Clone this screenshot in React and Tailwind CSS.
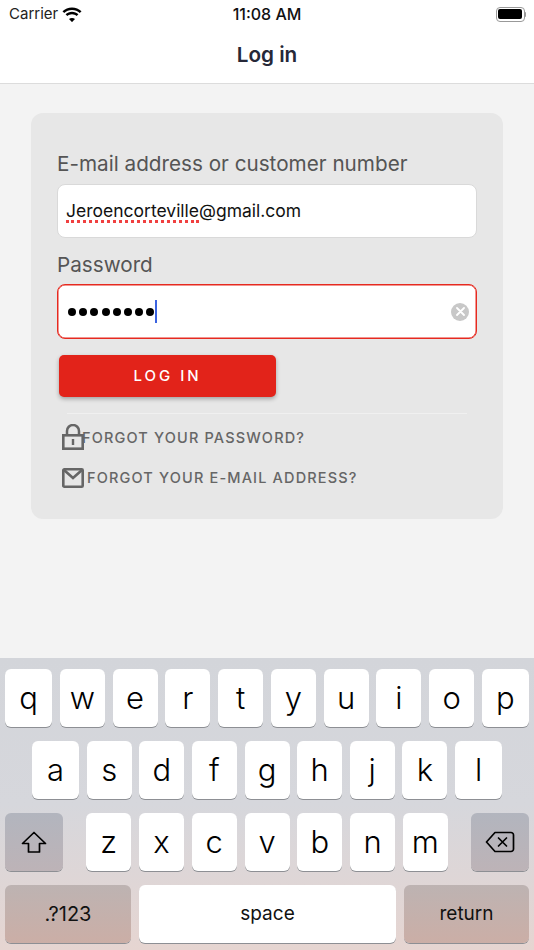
const row1 = ["q", "w", "e", "r", "t", "y", "u", "i", "o", "p"];
const row2 = ["a", "s", "d", "f", "g", "h", "j", "k", "l"];
const row3 = ["z", "x", "c", "v", "b", "n", "m"];

function Key({ label, wide }) {
  return (
    <div className={`${wide ? "w-[47px]" : "w-[45px]"} h-[58px] bg-white rounded-[6px] shadow-[0_1px_0_#8d8f94] flex items-center justify-center pb-[2px] text-[31px] leading-none text-black font-light`}>
      {label}
    </div>
  );
}

function StatusBar() {
  return (
    <div className="h-[28px] flex items-center justify-between pl-[9px] pr-[8px] text-[#111]">
      <div className="flex items-center gap-[4px] w-[119px]">
        <span className="text-[15px] text-[#222]">Carrier</span>
        <svg width="20" height="15" viewBox="0 0 20 15" fill="#000">
          <path d="M10 3c3 0 5.700 1.100 7.800 3.100L19.500 4.300C17 1.800 13.700.5 10 .5S3 1.800.5 4.300l1.700 1.800C4.300 4.100 7 3 10 3z" />
          <path d="M10 7.300c1.800 0 3.400.7 4.700 1.800l1.700-1.800C14.700 5.700 12.500 4.800 10 4.800s-4.700.9-6.400 2.500l1.700 1.800c1.300-1.100 2.900-1.800 4.700-1.800z" />
          <path d="M10 11c-1.200 0-2.100.4-3 1.100l3 3 3-3c-.9-.7-1.800-1.100-3-1.100z" />
        </svg>
      </div>
      <span className="text-[16px] font-medium">11:08 AM</span>
      <div className="w-[120px] flex justify-end items-center">
        <div className="w-[29px] h-[15px] rounded-[4px] border border-[#999] p-[1.500px]">
          <div className="w-full h-full rounded-[2px] bg-black" />
        </div>
        <div className="w-[1.500px] h-[5px] bg-[#999] rounded-r-sm" />
      </div>
    </div>
  );
}

export default function App() {
  return (
    <div className="w-[534px] h-[950px] flex flex-col bg-[#f3f3f3] overflow-hidden font-['Inter','Liberation_Sans',sans-serif]">
      <div className="bg-white h-[84px] border-b border-[#dcdcdc]">
        <StatusBar />
        <div className="text-center mt-[13px] text-[20.700px] leading-[28px] font-semibold text-[#262838]">Log in</div>
      </div>

      <div className="flex-1 px-[31px] pt-[29px]">
        <div className="h-[406px] bg-[#e7e7e7] rounded-[12px] px-[26px] pt-[37px]">
          <div className="text-[20.700px] leading-[28px] text-[#555]">E-mail address or customer number</div>
          <div className="mt-[6px] h-[54px] bg-white rounded-[8px] border border-[#d9d9d9] flex items-center pl-[8px] text-[17.500px] text-[#111]">
            <span className="relative">
              Jeroencorteville
              <span className="absolute left-0 right-0 bottom-[1px] border-b-[3px] border-dotted border-[#f04040]" />
            </span>
            <span>@gmail.com</span>
          </div>
          <div className="mt-[13px] text-[20.700px] leading-[28px] text-[#555]">Password</div>
          <div className="mt-[5px] h-[55px] bg-white rounded-[8px] border border-[#e62a20] shadow-[inset_0_0_0_0.5px_#e62a20] flex items-center justify-between pl-[10px] pr-[7px]">
            <div className="flex items-center gap-[3.200px]">
              {[0, 1, 2, 3, 4, 5, 6, 7].map((n) => (
                <div key={n} className="w-[8px] h-[8px] rounded-full bg-black" />
              ))}
              <div className="w-[2.500px] h-[23px] bg-[#3b63e0] -ml-[3px]" />
            </div>
            <div className="w-[18px] h-[18px] rounded-full bg-[#c8c8c8] flex items-center justify-center">
              <svg width="9" height="9" viewBox="0 0 9 9" stroke="#fff" strokeWidth="1.800" strokeLinecap="round">
                <path d="M1 1l7 7M8 1l-7 7" />
              </svg>
            </div>
          </div>
          <button className="mt-[16px] ml-[2px] w-[217px] h-[42px] bg-[#e2231a] rounded-[5px] shadow-[0_2px_4px_rgba(0,0,0,0.3)] text-white text-[15px] font-medium tracking-[0.2em] block">
            LOG IN
          </button>
          <div className="mt-[16px] mx-[10px] h-px bg-[#f0f0f0]" />
          <div className="mt-[11px] ml-[5px] h-[25px] flex items-center text-[14.500px] font-medium tracking-[0.08em] text-[#666]">
            <svg width="22" height="26" viewBox="0 0 22 26" fill="none" stroke="#666" className="shrink-0 -mr-[2px] -mt-[2px]">
              <path d="M5 11V7a6 6 0 0 1 12 0v4" strokeWidth="2.500" />
              <rect x="1.300" y="11.300" width="19.400" height="13.400" strokeWidth="2.600" />
              <rect x="9.800" y="15" width="2.400" height="6" fill="#666" stroke="none" />
            </svg>
            <span>FORGOT YOUR PASSWORD?</span>
          </div>
          <div className="mt-[15px] ml-[5px] h-[25px] flex items-center gap-[3px] text-[14.500px] font-medium tracking-[0.08em] text-[#666]">
            <svg width="22" height="20" viewBox="0 0 22 20" fill="none" stroke="#666" strokeWidth="2.600" className="shrink-0">
              <rect x="1.300" y="1.300" width="19.400" height="17.400" rx="1" />
              <path d="M2 2l9 8 9-8" />
            </svg>
            <span>FORGOT YOUR E-MAIL ADDRESS?</span>
          </div>
        </div>
      </div>

      <div className="h-[292px] shrink-0 bg-gradient-to-b from-[#d3d5da] via-[#d6d7dc] to-[#e6d5d1] px-[5px] pt-[11px] flex flex-col gap-[14px]">
        <div className="flex justify-between">
          {row1.map((k, i) => <Key key={k} label={k} wide={i === 0 || i === 9} />)}
        </div>
        <div className="flex justify-between px-[27px]">
          {row2.map((k, i) => <Key key={k} label={k} wide={i === 0 || i === 8} />)}
        </div>
        <div className="flex justify-between">
          <div className="w-[58px] h-[58px] rounded-[6px] bg-gradient-to-b from-[#b2b5be] to-[#bdb3b7] shadow-[0_1px_0_#8d8f94] flex items-center justify-center">
            <svg width="26" height="23" viewBox="0 0 26 23" fill="none" stroke="#000" strokeWidth="1.700" strokeLinejoin="round">
              <path d="M13 1.500L1.500 12.500h6v8.500h11v-8.500h6z" />
            </svg>
          </div>
          <div className="flex gap-[7.750px]">
            {row3.map((k) => <Key key={k} label={k} />)}
          </div>
          <div className="w-[58px] h-[58px] rounded-[6px] bg-gradient-to-b from-[#b2b5be] to-[#bdb3b7] shadow-[0_1px_0_#8d8f94] flex items-center justify-center">
            <svg width="30" height="22" viewBox="0 0 30 22" fill="none" stroke="#000" strokeWidth="1.700" strokeLinejoin="round" strokeLinecap="round">
              <path d="M10 1.500h16a2.500 2.500 0 0 1 2.500 2.500v14a2.500 2.500 0 0 1-2.500 2.500H10L1.500 11z" />
              <path d="M13.500 7l8 8M21.500 7l-8 8" />
            </svg>
          </div>
        </div>
        <div className="flex justify-between">
          <div className="w-[126px] h-[58px] rounded-[6px] bg-gradient-to-b from-[#bdb3b2] to-[#cbaea6] shadow-[0_1px_0_#8d8f94] flex items-center justify-center text-[20px] text-[#111]">.?123</div>
          <div className="w-[257px] h-[58px] rounded-[6px] bg-white shadow-[0_1px_0_#8d8f94] flex items-center justify-center text-[19px] text-[#111]">space</div>
          <div className="w-[125px] h-[58px] rounded-[6px] bg-gradient-to-b from-[#bdb3b2] to-[#cbaea6] shadow-[0_1px_0_#8d8f94] flex items-center justify-center text-[19px] text-[#111]">return</div>
        </div>
      </div>
    </div>
  );
}
